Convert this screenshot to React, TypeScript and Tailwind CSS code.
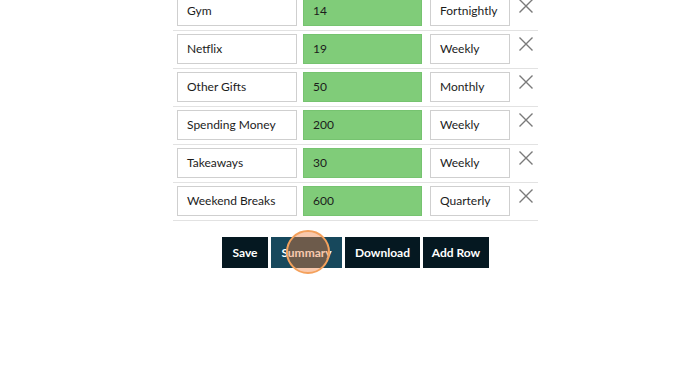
const rows = [
  { name: "Gym", amount: "14", freq: "Fortnightly" },
  { name: "Netflix", amount: "19", freq: "Weekly" },
  { name: "Other Gifts", amount: "50", freq: "Monthly" },
  { name: "Spending Money", amount: "200", freq: "Weekly" },
  { name: "Takeaways", amount: "30", freq: "Weekly" },
  { name: "Weekend Breaks", amount: "600", freq: "Quarterly" },
];

function RemoveIcon() {
  return (
    <svg width="14" height="14" viewBox="0 0 14 14" className="block">
      <path d="M0.5 0.5 13.5 13.5M13.5 0.5 0.5 13.5" stroke="#7a7a7a" strokeWidth="1.4" fill="none" />
    </svg>
  );
}

export default function App() {
  return (
    <div className="h-[384px] w-[688px] overflow-hidden bg-white font-['Lato','Liberation_Sans',sans-serif] text-[12px] text-[#1c1c1c]">
      <div className="flex justify-center pl-[23px]">
        <div className="w-[365px] mt-[-7px]">
          {rows.map((r) => (
            <div key={r.name} className="flex items-start border-b border-[#e2e2e2] pl-[4px] pt-[3px] pb-[4px]">
              <div className="flex h-[30px] w-[120px] items-center border border-[#cfcfcf] bg-white px-[9px]">{r.name}</div>
              <div className="ml-[6px] flex h-[30px] w-[119px] items-center border border-[#76c370] bg-[#80cc79] px-[9px]">{r.amount}</div>
              <div className="ml-[8px] flex h-[30px] w-[80px] items-center border border-[#cfcfcf] bg-white px-[9px]">{r.freq}</div>
              <div className="ml-[9px] mt-[3px]">
                <RemoveIcon />
              </div>
            </div>
          ))}
          <div className="mt-[16px] flex justify-center gap-[3px] text-[12px] font-bold text-white">
            <button className="h-[31px] w-[46px] bg-[#051821]">Save</button>
            <div className="relative">
              <button className="h-[31px] w-[71px] bg-[#17485c]">Summary</button>
              <span className="pointer-events-none absolute left-[15px] top-[-7px] h-[44px] w-[44px] rounded-full border-2 border-[#f4a15c] bg-[rgba(240,120,50,0.4)]" />
            </div>
            <button className="h-[31px] w-[75px] bg-[#051821]">Download</button>
            <button className="h-[31px] w-[66px] bg-[#051821]">Add Row</button>
          </div>
        </div>
      </div>
    </div>
  );
}
